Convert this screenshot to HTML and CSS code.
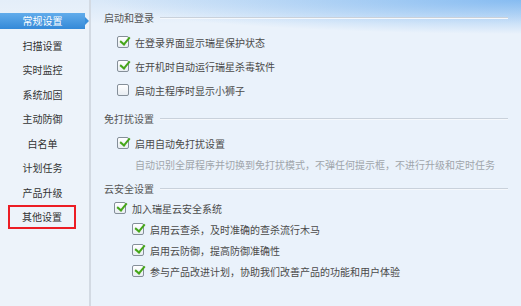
FILE: index.html
```html
<!DOCTYPE html>
<html lang="zh-CN">
<head>
    <meta charset="UTF-8">
    <title>设置</title>
    <link rel="stylesheet" href="styles.css">
</head>
<body>
    <div class="ventana">
        <!-- Menú lateral -->
        <ul class="menu">
            <li class="menu-item activo">常规设置</li>
            <li class="menu-item">扫描设置</li>
            <li class="menu-item">实时监控</li>
            <li class="menu-item">系统加固</li>
            <li class="menu-item">主动防御</li>
            <li class="menu-item">白名单</li>
            <li class="menu-item">计划任务</li>
            <li class="menu-item">产品升级</li>
            <li class="menu-item marcado">其他设置</li>
        </ul>

        <!-- Contenido -->
        <div class="contenido">
            <div class="seccion s-login">
                <div class="titulo"><span>启动和登录</span><i></i></div>
                <div class="grupo g-login">
                    <label class="opcion"><span class="caja si"></span>在登录界面显示瑞星保护状态</label>
                    <label class="opcion"><span class="caja si"></span>在开机时自动运行瑞星杀毒软件</label>
                    <label class="opcion"><span class="caja"></span>启动主程序时显示小狮子</label>
                </div>
            </div>

            <div class="seccion s-molestia">
                <div class="titulo"><span>免打扰设置</span><i></i></div>
                <div class="grupo g-molestia">
                    <label class="opcion"><span class="caja si"></span>启用自动免打扰设置</label>
                    <p class="nota">自动识别全屏程序并切换到免打扰模式，不弹任何提示框，不进行升级和定时任务</p>
                </div>
            </div>

            <div class="seccion s-nube">
                <div class="titulo"><span>云安全设置</span><i></i></div>
                <div class="grupo g-nube">
                    <label class="opcion"><span class="caja si"></span>加入瑞星云安全系统</label>
                    <div class="sub">
                        <label class="opcion"><span class="caja si"></span>启用云查杀，及时准确的查杀流行木马</label>
                        <label class="opcion"><span class="caja si"></span>启用云防御，提高防御准确性</label>
                        <label class="opcion"><span class="caja si"></span>参与产品改进计划，协助我们改善产品的功能和用户体验</label>
                    </div>
                </div>
            </div>
        </div>
    </div>
</body>
</html>
```

FILE: styles.css
```css
/* Estilos generales */
* {
    box-sizing: border-box;
}
html, body {
    margin: 0;
    padding: 0;
}
body {
    width: 521px;
    height: 306px;
    overflow: hidden;
    font-family: "Noto Sans CJK SC", "Noto Sans", sans-serif;
    font-size: 10px;
    color: #4a4a4a;
    background-color: #eaf2fb;
}
.ventana {
    display: flex;
    height: 306px;
    background:
        radial-gradient(ellipse 420px 34px at 100% 0, rgba(120, 180, 240, 0.85), rgba(120, 180, 240, 0) 100%),
        linear-gradient(to bottom, #d9e8f8 0, #eaf2fb 24px);
}

/* Menú lateral */
.menu {
    list-style: none;
    margin: 0;
    padding: 13px 0 0 0;
    width: 91px;
    flex-shrink: 0;
    display: flex;
    flex-direction: column;
    gap: 8.5px;
    border-right: 2px solid #d3dae3;
    background: linear-gradient(to bottom, #e4eef9 0, #edf3fa 30px);
}
.menu-item {
    position: relative;
    height: 16px;
    width: 85px;
    line-height: 16px;
    text-align: center;
    color: #333;
}
.menu-item.activo {
    color: #fff;
    background: linear-gradient(to bottom, #62aceb 0, #3489d8 100%);
}
.menu-item.activo::after {
    content: "";
    position: absolute;
    right: -4px;
    top: 4px;
    border-left: 4px solid #3a8fdb;
    border-top: 4px solid transparent;
    border-bottom: 4px solid transparent;
}
.menu-item.marcado {
    width: 68px;
    height: 24px;
    line-height: 20px;
    margin: -4px 0 -4px 8px;
    border: 2px solid #ec1c24;
}

/* Contenido */
.contenido {
    flex: 1;
    padding: 10px 13px 0 13px;
}
.titulo {
    display: flex;
    align-items: center;
    height: 14px;
    color: #555;
}
.titulo i {
    flex: 1;
    height: 1px;
    margin-left: 6px;
    background-color: #c9d1db;
    box-shadow: 0 1px 0 #f5f8fc;
}
.grupo {
    display: flex;
    flex-direction: column;
}
.opcion {
    display: flex;
    align-items: center;
    height: 14px;
    white-space: nowrap;
}
.caja {
    position: relative;
    width: 12px;
    height: 12px;
    margin-right: 6px;
    flex-shrink: 0;
    border: 1px solid #858f99;
    border-radius: 2px;
    background: linear-gradient(to bottom, #ffffff, #e8edf2);
}
.caja.si::after {
    content: "";
    position: absolute;
    left: 4px;
    top: -2px;
    width: 4px;
    height: 8px;
    border-right: 2px solid #45a619;
    border-bottom: 2px solid #45a619;
    transform: rotate(40deg);
}

.g-login {
    padding: 11px 0 0 13px;
    gap: 10px;
}
.s-molestia {
    margin-top: 14px;
}
.g-molestia {
    padding: 11px 0 0 13px;
}
.nota {
    margin: 8px 0 0 18px;
    height: 14px;
    line-height: 14px;
    color: #a0a5ab;
    white-space: nowrap;
}
.s-nube {
    margin-top: 9px;
}
.g-nube {
    padding: 6px 0 0 10px;
}
.sub {
    display: flex;
    flex-direction: column;
    gap: 7px;
    padding: 7px 0 0 18px;
}
```
